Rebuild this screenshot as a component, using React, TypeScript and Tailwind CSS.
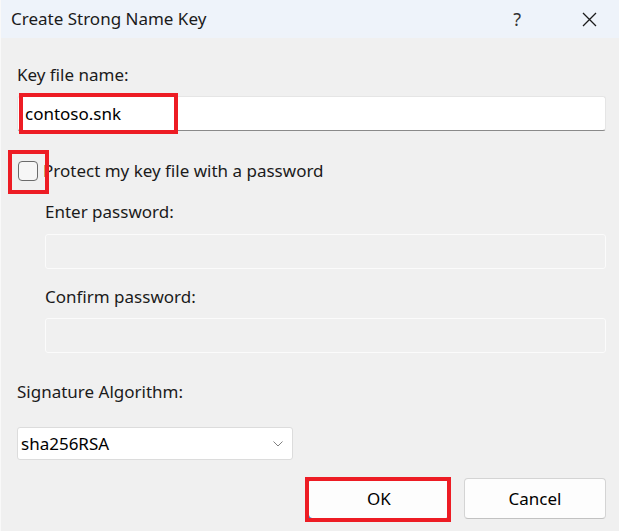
import React from 'react';

const font = { fontFamily: '"Noto Sans", "Open Sans", Arial, sans-serif' };

function Label({ children, indent = false }: { children: React.ReactNode; indent?: boolean }) {
    return <div className={`h-[24px] leading-[24px] text-[17px] text-[#1b1b1b] ${indent ? 'pl-[28px]' : ''}`}>{children}</div>;
}

export default function App() {
    return (
        <div className="relative w-[619px] h-[531px] bg-[#f0f0f0] border-l border-[#f9f9f9] overflow-hidden" style={font}>
            {/* title bar */}
            <div className="h-[38px] bg-[#eef3fa] flex items-center pl-[10px] pr-[22px]">
                <div className="text-[17px] text-[#1b1b1b] flex-1">Create Strong Name Key</div>
                <div className="text-[18px] text-[#333] mr-[61px] leading-none">?</div>
                <svg width="15" height="15" viewBox="0 0 15 15" className="mt-[1px]">
                    <path d="M1 1 L14 14 M14 1 L1 14" stroke="#1b1b1b" strokeWidth="1.3" fill="none" />
                </svg>
            </div>

            <div className="flex flex-col pl-[16px] pr-[13px] pt-[25px]">
                <Label>Key file name:</Label>
                <div className="mt-[9px] h-[35px] bg-white border border-[#e5e5e5] border-b-[#8a8a8a] rounded-[3px] flex items-center pl-[7px] text-[17px] text-black">
                    contoso.snk
                </div>

                <div className="mt-[28px] h-[24px] flex items-center">
                    <div className="w-[20px] h-[20px] ml-[1px] rounded-[4px] border border-[#6b6b6b] bg-[#f6f6f6]" />
                    <span className="ml-[5px] text-[17px] text-[#1b1b1b]">Protect my key file with a password</span>
                </div>

                <div className="mt-[17px]">
                    <Label indent>Enter password:</Label>
                </div>
                <div className="mt-[10px] ml-[28px] h-[35px] border border-[#fbfbfb] rounded-[3px]" />

                <div className="mt-[16px]">
                    <Label indent>Confirm password:</Label>
                </div>
                <div className="mt-[9px] ml-[28px] h-[35px] border border-[#fbfbfb] rounded-[3px]" />

                <div className="mt-[27px]">
                    <Label>Signature Algorithm:</Label>
                </div>
                <div className="mt-[23px] w-[276px] h-[33px] bg-white border border-[#dcdcdc] rounded-[3px] flex items-center justify-between pl-[3px] pr-[9px]">
                    <span className="text-[17px] text-black">sha256RSA</span>
                    <svg width="10" height="6" viewBox="0 0 10 6">
                        <path d="M0.5 0.5 L5 5 L9.5 0.5" stroke="#808080" strokeWidth="1" fill="none" />
                    </svg>
                </div>

                <div className="mt-[18px] flex justify-end gap-[14px]">
                    <button className="w-[142px] h-[41px] bg-[#fdfdfd] border border-[#0067c0] rounded-[4px] text-[17px] text-black">
                        OK
                    </button>
                    <button className="w-[142px] h-[41px] bg-[#fdfdfd] border border-[#d4d4d4] border-b-[#c2c2c2] rounded-[4px] text-[17px] text-black">
                        Cancel
                    </button>
                </div>
            </div>

            {/* red highlight annotations */}
            <div className="absolute left-[18px] top-[93px] w-[159px] h-[41px] border-4 border-[#ed1c24]" />
            <div className="absolute left-[7px] top-[150px] w-[41px] h-[44px] border-4 border-[#ed1c24]" />
            <div className="absolute left-[304px] top-[477px] w-[146px] h-[45px] border-4 border-[#ed1c24]" />
        </div>
    );
}
